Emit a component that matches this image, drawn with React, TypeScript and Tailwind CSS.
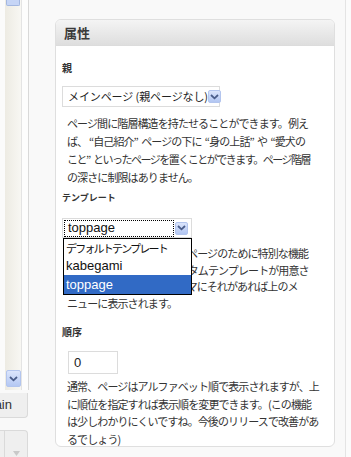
import React from "react";

const jp = "font-['Noto_Sans_CJK_JP','Noto_Sans',sans-serif]";
const lat = "font-['Liberation_Sans','Noto_Sans_CJK_JP',sans-serif]";

function Arrow() {
  return (
    <div className="w-[13px] h-[13px] rounded-[2px] border border-[#b3c5ee] bg-gradient-to-b from-[#dbe5fc] to-[#b2c6f2] flex items-center justify-center shrink-0">
      <svg width="9" height="6" viewBox="0 0 9 6">
        <path d="M1 1 L4.5 4.3 L8 1" stroke="#4a5d8a" strokeWidth="1.8" fill="none" />
      </svg>
    </div>
  );
}

function Oq() {
  return <span className="inline-block w-[6px] text-right">“</span>;
}
function Cq() {
  return <span className="inline-block w-[6px] text-left">”</span>;
}

function Lines({ lines, lh }: { lines: React.ReactNode[]; lh: string }) {
  return (
    <div className={`pl-[5px] text-[11px] tracking-[-0.9px] text-[#333] whitespace-nowrap ${lh} ${jp}`}>
      {lines.map((l, i) => (
        <div key={i}>{l}</div>
      ))}
    </div>
  );
}

export default function App() {
  return (
    <div className="w-[351px] h-[457px] bg-[#f9f9f9] flex overflow-hidden">
      {/* left sidebar */}
      <div className="w-[29px] flex flex-col shrink-0">
        <div className="h-[390px] flex">
          <div className="w-[5px] bg-[#fbfbfb]" />
          <div className="w-[16px] flex flex-col bg-gradient-to-r from-[#edebe3] to-[#f8f7f3]">
            <div className="h-[6px] mx-[1px] bg-[#c6d5f6] border-x border-b border-[#a3b7e0] rounded-b-[2px]" />
            <div className="mt-auto mb-[3px] self-end w-[15px] h-[17px] rounded-[2px] border border-[#b3c5ee] bg-gradient-to-b from-[#dbe5fc] to-[#b5c8f3] flex items-center justify-center">
              <svg width="9" height="6" viewBox="0 0 9 6">
                <path d="M1 1 L4.5 4.3 L8 1" stroke="#4a5d8a" strokeWidth="1.8" fill="none" />
              </svg>
            </div>
          </div>
          <div className="w-px bg-[#e4e4e4]" />
          <div className="w-[6px] bg-[#fdfdfd]" />
          <div className="w-px bg-[#d9d9d9]" />
        </div>
        <div className={`mt-[3px] h-[25px] w-[28px] bg-[#efefef] border-r border-b border-[#dadada] rounded-br-[4px] flex justify-end items-center pr-[15px] overflow-hidden text-[13px] text-[#333] whitespace-nowrap ${lat}`}>
          Main
        </div>
        <div className="mt-[12px] h-[27px] w-[28px] bg-[#efefef] border-t border-r border-[#dadada] rounded-tr-[4px] flex">
          <div className="w-[4px]" />
          <div className="w-px bg-[#dadada]" />
          <div className="flex-1 flex justify-center pt-[20px]">
            <svg width="7" height="5" viewBox="0 0 7 5">
              <path d="M0 0 L7 0 L3.5 5 Z" fill="#c9c9c9" />
            </svg>
          </div>
        </div>
      </div>

      {/* panel */}
      <div className="ml-[26px] mt-[19px] w-[280px] h-[428px] shrink-0 border border-[#dfdfdf] rounded-[6px] bg-white flex flex-col">
        <div className={`h-[26px] shrink-0 rounded-t-[5px] bg-gradient-to-b from-[#f4f4f4] to-[#dedede] border-b border-[#dcdcdc] pl-[8px] flex items-center text-[13px] font-bold text-[#3a3a3a] ${jp}`}>
          属性
        </div>
        <div className="pl-[6px] flex flex-col">
          <div className={`mt-[15px] h-[14px] leading-[14px] text-[10px] font-bold text-[#333] ${jp}`}>親</div>

          <div className="mt-[11px] w-[158px] h-[21px] border border-[#dcdcdc] bg-white flex items-center pr-[1px]">
            <div className={`flex-1 pl-[5px] text-[11px] tracking-[-0.1px] text-[#222] whitespace-nowrap ${jp}`}>
              メインページ (親ページなし)
            </div>
            <Arrow />
          </div>

          <div className="mt-[7px]">
            <Lines
              lh="leading-[18px]"
              lines={[
                "ページ間に階層構造を持たせることができます。例え",
                <>
                  ば、<Oq />自己紹介<Cq /> ページの下に <Oq />身の上話<Cq /> や <Oq />愛犬の
                </>,
                <span className="tracking-[-1.5px]">
                  こと<Cq /> といったページを置くことができます。ページ階層
                </span>,
                "の深さに制限はありません。",
              ]}
            />
          </div>

          <div className={`mt-[5px] h-[14px] leading-[14px] text-[9px] font-bold text-[#333] ${jp}`}>テンプレート</div>

          <div className="relative">
            <div className="mt-[13px] w-[130px] h-[20px] border border-[#dcdcdc] bg-white flex items-center pl-[1px] pr-[3px]">
              <div className={`w-[110px] h-[17px] border border-dotted border-black flex items-center pl-[3px] text-[13px] text-[#111] ${lat}`}>
                toppage
              </div>
              <div className="ml-auto">
                <Arrow />
              </div>
            </div>

            <div className="mt-[7px]">
              <Lines
                lh="leading-[16.5px]"
                lines={[
                  "テーマによっては、特定のページのために特別な機能",
                  "やレイアウトを持つ、カスタムテンプレートが用意さ",
                  "れています。使用中のテーマにそれがあれば上のメ",
                  "ニューに表示されます。",
                ]}
              />
            </div>

            <div className="absolute left-[1px] top-[33px] w-[129px] border border-black bg-white text-[13px] text-[#111] z-10">
              <div className={`h-[18px] leading-[18px] pl-[2px] text-[11px] tracking-[-1.8px] whitespace-nowrap ${jp}`}>デフォルトテンプレート</div>
              <div className={`h-[18px] leading-[18px] pl-[2px] ${lat}`}>kabegami</div>
              <div className={`h-[19px] leading-[19px] pl-[2px] bg-[#316ac5] text-white ${lat}`}>toppage</div>
            </div>
          </div>

          <div className={`mt-[14px] h-[14px] leading-[14px] text-[10px] font-bold text-[#333] ${jp}`}>順序</div>

          <div className={`mt-[12px] ml-[6px] w-[50px] h-[23px] border border-[#dcdcdc] bg-white flex items-center pl-[5px] text-[13px] text-[#222] ${lat}`}>
            0
          </div>

          <div className="mt-[4px]">
            <Lines
              lh="leading-[17.5px]"
              lines={[
                "通常、ページはアルファベット順で表示されますが、上",
                "に順位を指定すれば表示順を変更できます。(この機能",
                "は少しわかりにくいですね。今後のリリースで改善があ",
                "るでしょう)",
              ]}
            />
          </div>
        </div>
      </div>

      {/* right */}
      <div className="w-[10px] shrink-0" />
      <div className="w-px bg-[#e4e4e4] shrink-0" />
      <div className="flex-1 bg-[#fbfbfb]" />
    </div>
  );
}
